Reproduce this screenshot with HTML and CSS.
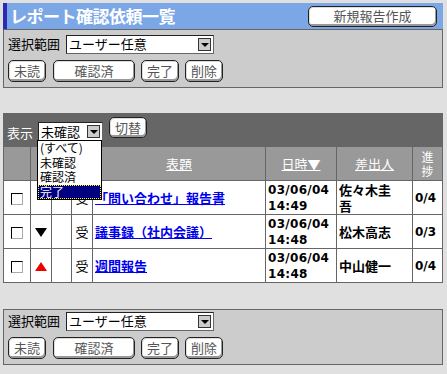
FILE: index.html
```html
<!DOCTYPE html>
<html lang="ja">
<head>
    <meta charset="UTF-8">
    <title>レポート確認依頼一覧</title>
    <link rel="stylesheet" href="styles.css">
</head>
<body>
<div class="page">

    <div class="titlebar">
        <h1>レポート確認依頼一覧</h1>
        <span class="btn btn_new">新規報告作成</span>
    </div>

    <div class="panel">
        <div class="range_row">
            <span class="label">選択範囲</span>
            <div class="select select_range"><span class="value">ユーザー任意</span><span class="arrow"></span></div>
        </div>
        <div class="btn_row">
            <span class="btn btn_s">未読</span>
            <span class="btn btn_l">確認済</span>
            <span class="btn btn_s">完了</span>
            <span class="btn btn_s">削除</span>
        </div>
    </div>

    <div class="list_box">
        <div class="filter_bar">
            <span class="label">表示</span>
            <div class="select select_filter"><span class="value">未確認</span><span class="arrow"></span></div>
            <span class="btn btn_switch">切替</span>

            <ul class="dropdown">
                <li>(すべて)</li>
                <li>未確認</li>
                <li>確認済</li>
                <li class="selected">完了</li>
            </ul>
        </div>

        <table class="report_table">
            <tr class="head">
                <th class="c_chk"></th>
                <th class="c_mark"></th>
                <th class="c_mark2"></th>
                <th class="c_type"></th>
                <th class="c_title"><u>表題</u></th>
                <th class="c_date"><u>日時▼</u></th>
                <th class="c_from"><u>差出人</u></th>
                <th class="c_prog">進<br>捗</th>
            </tr>
            <tr>
                <td><span class="chk"></span></td>
                <td></td>
                <td></td>
                <td class="type">受</td>
                <td><a href="#">「問い合わせ」報告書</a></td>
                <td>03/06/04<br>14:49</td>
                <td>佐々木圭<br>吾</td>
                <td>0/4</td>
            </tr>
            <tr>
                <td><span class="chk"></span></td>
                <td><span class="tri_down"></span></td>
                <td></td>
                <td class="type">受</td>
                <td><a href="#">議事録（社内会議）</a></td>
                <td>03/06/04<br>14:48</td>
                <td>松木高志</td>
                <td>0/3</td>
            </tr>
            <tr>
                <td><span class="chk"></span></td>
                <td><span class="tri_up"></span></td>
                <td></td>
                <td class="type">受</td>
                <td><a href="#">週間報告</a></td>
                <td>03/06/04<br>14:48</td>
                <td>中山健一</td>
                <td>0/4</td>
            </tr>
        </table>
    </div>

    <div class="panel panel_bottom">
        <div class="range_row">
            <span class="label">選択範囲</span>
            <div class="select select_range"><span class="value">ユーザー任意</span><span class="arrow"></span></div>
        </div>
        <div class="btn_row">
            <span class="btn btn_s">未読</span>
            <span class="btn btn_l">確認済</span>
            <span class="btn btn_s">完了</span>
            <span class="btn btn_s">削除</span>
        </div>
    </div>

</div>
</body>
</html>
```

FILE: styles.css
```css
body {
    margin: 0;
    background-color: #e0e0e0;
    font-family: "Noto Sans CJK JP", "Liberation Sans", sans-serif;
    font-size: 13px;
    line-height: 16px;
    color: #000;
}

.page {
    width: 440px;
    padding: 3px;
}

/* title */
.titlebar {
    height: 26px;
    background-color: #7ba7e6;
    border-left: 4px solid #2b2bb8;
    display: flex;
    align-items: center;
    justify-content: space-between;
    padding: 0 6px 0 3px;
}

.titlebar h1 {
    margin: 0;
    font-size: 17px;
    line-height: 20px;
    font-weight: bold;
    color: #fff;
    letter-spacing: -0.5px;
}

/* buttons */
.btn {
    display: inline-flex;
    align-items: center;
    justify-content: center;
    box-sizing: border-box;
    height: 22px;
    background-color: #fff;
    border: 1px solid #222;
    border-radius: 5px;
    box-shadow: inset -1px -2px 0 #999, inset 1px 1px 0 #ddd;
    color: #555;
    font-size: 13px;
}

.btn_new {
    width: 129px;
    height: 21px;
}

.btn_s {
    width: 38px;
}

.btn_l {
    width: 82px;
}

.btn_switch {
    width: 38px;
    height: 21px;
    margin-left: 6px;
    margin-top: -4px;
}

/* panels */
.panel {
    background-color: #ccc;
    border: 1px solid #666;
    padding: 4px 0 6px 4px;
    height: 47px;
}

.panel_bottom {
    margin-top: 26px;
    padding-top: 1px;
}

.range_row {
    display: flex;
    align-items: center;
    height: 20px;
}

.range_row .label {
    width: 58px;
}

.btn_row {
    display: flex;
    gap: 6px;
    margin-top: 6px;
}

.btn_row .btn:nth-child(2) {
    margin-left: 1px;
}

/* fake select boxes */
.select {
    display: flex;
    align-items: center;
    box-sizing: border-box;
    height: 19px;
    background-color: #fff;
    border: 1px solid #666;
    border-top-color: #222;
    border-left-color: #222;
    padding-left: 2px;
}

.select .value {
    flex: 1;
    font-size: 13px;
}

.select .arrow {
    width: 13px;
    height: 13px;
    margin-right: 2px;
    background-color: #ccc;
    border: 1px solid #333;
    box-sizing: border-box;
    position: relative;
}

.select .arrow::after {
    content: "";
    position: absolute;
    left: 2px;
    top: 4px;
    border-left: 4px solid transparent;
    border-right: 4px solid transparent;
    border-top: 4px solid #000;
}

.select_range {
    width: 148px;
}

.select_filter {
    width: 65px;
    height: 19px;
}

/* list */
.list_box {
    margin-top: 25px;
}

.filter_bar {
    background-color: #666;
    height: 33px;
    display: flex;
    align-items: center;
    padding-left: 4px;
    position: relative;
}

.filter_bar .label {
    color: #fff;
    width: 31px;
    margin-top: 6px;
}

.filter_bar .select {
    margin-top: 4px;
}

.dropdown {
    position: absolute;
    left: 34px;
    top: 27px;
    width: 65px;
    margin: 0;
    padding: 0;
    list-style: none;
    background-color: #fff;
    border: 1px solid #000;
    box-sizing: border-box;
    z-index: 2;
}

.dropdown li {
    height: 14.5px;
    line-height: 14px;
    padding-left: 2px;
    font-size: 12px;
}

.dropdown li.selected {
    background-color: #000080;
    color: #fff;
    outline: 1px dotted #ff0;
    outline-offset: -1px;
}

.report_table {
    width: 440px;
    border-collapse: collapse;
    background-color: #fff;
}

.report_table th,
.report_table td {
    border: 1px solid #666;
    padding: 0 2px;
}

.report_table th {
    background-color: #999;
    color: #fff;
    font-weight: normal;
    height: 33px;
    text-align: center;
}

.report_table .c_chk { width: 22px; }
.report_table .c_mark { width: 16px; }
.report_table .c_mark2 { width: 15px; }
.report_table .c_type { width: 16px; }
.report_table .c_date { width: 66px; }
.report_table .c_from { width: 71px; }
.report_table .c_prog { width: 25px; font-size: 12px; line-height: 14px; }

.report_table td {
    height: 33px;
    font-weight: bold;
    vertical-align: middle;
}

.report_table td:nth-child(1),
.report_table td:nth-child(2),
.report_table td:nth-child(4) {
    text-align: center;
}

.report_table td:nth-child(6) {
    font-family: "DejaVu Sans", "Liberation Sans", sans-serif;
    font-size: 12px;
    letter-spacing: 0.3px;
}

.report_table td:nth-child(8) {
    font-family: "DejaVu Sans", "Liberation Sans", sans-serif;
    font-size: 12px;
}

.report_table .type {
    font-weight: normal;
}

.report_table a {
    color: #0000ee;
    font-weight: bold;
}

.chk {
    display: inline-block;
    width: 10px;
    height: 10px;
    border: 1px solid #000;
    border-right-color: #aaa;
    border-bottom-color: #aaa;
    background-color: #fff;
    vertical-align: middle;
}

.tri_down,
.tri_up {
    display: inline-block;
    width: 0;
    height: 0;
    border-left: 6px solid transparent;
    border-right: 6px solid transparent;
    vertical-align: middle;
}

.tri_down {
    border-top: 9px solid #000;
}

.tri_up {
    border-bottom: 9px solid #e00;
}
```
